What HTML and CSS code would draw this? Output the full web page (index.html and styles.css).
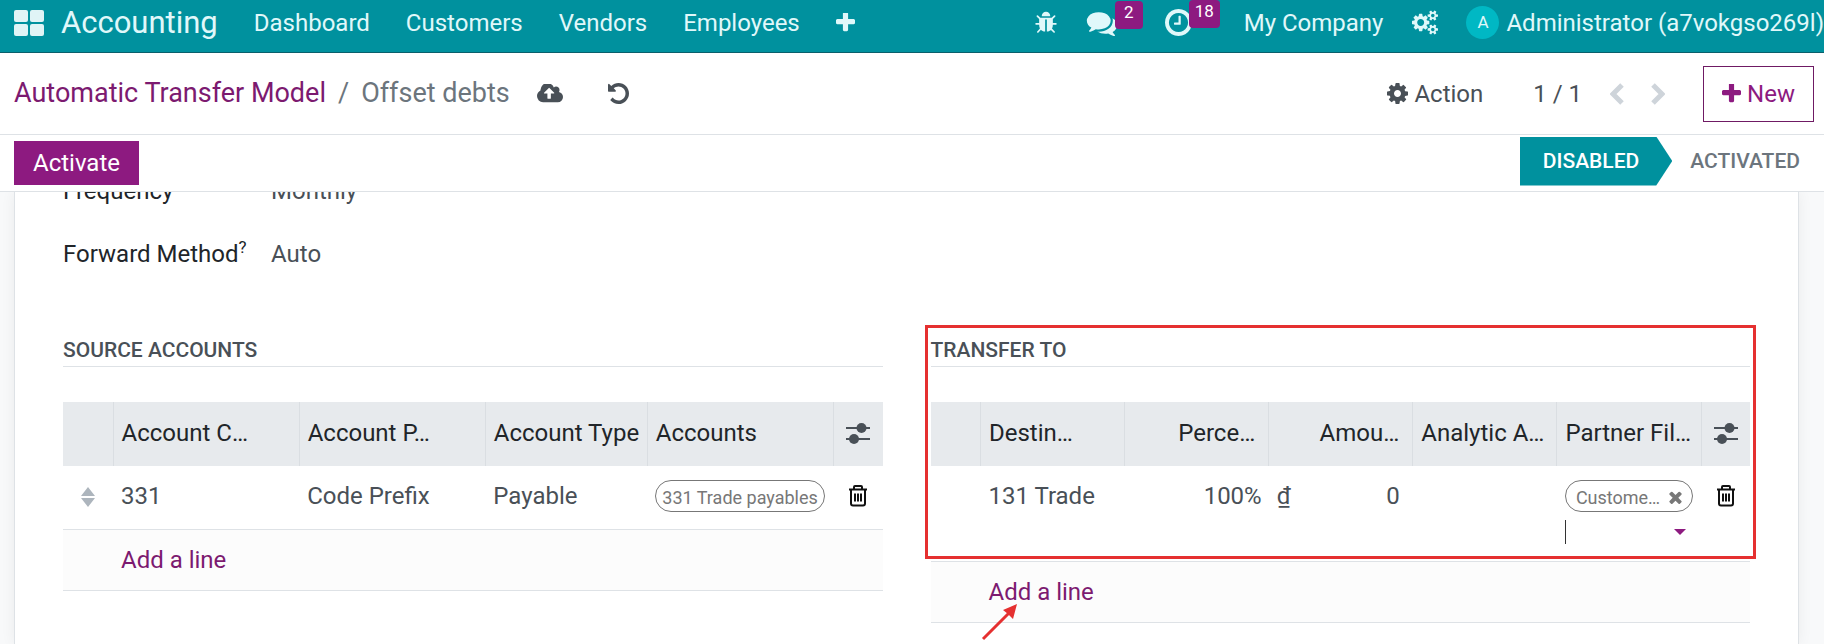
FILE: index.html
```
<!DOCTYPE html>
<html lang="en">
<head>
    <meta charset="UTF-8">
    <title>Offset debts - Accounting</title>
    <link rel="stylesheet" href="styles.css">
</head>
<body>
    <svg class="sprite" aria-hidden="true">
        <symbol id="i-plus" viewBox="192 192 1408 1408"><path d="M1600 736v192q0 40-28 68t-68 28h-416v416q0 40-28 68t-68 28h-192q-40 0-68-28t-28-68v-416h-416q-40 0-68-28t-28-68v-192q0-40 28-68t68-28h416v-416q0-40 28-68t68-28h192q40 0 68 28t28 68v416h416q40 0 68 28t28 68z"/></symbol>
        <symbol id="i-bug" viewBox="0 0 1792 1792"><path d="M1696 960q0 26-19 45t-45 19h-224q0 171-67 290l208 209q19 19 19 45t-19 45q-18 19-45 19t-45-19l-198-197q-5 5-15 13t-42 28.500-65 36.500-82 29-97 13v-896h-128v896q-51 0-101.500-13.500t-87-33-66-39-43.500-32.500l-15-14-183 207q-20 21-48 21-24 0-43-16-19-18-20.500-44.500t15.500-46.500l202-227q-58-114-58-274h-224q-26 0-45-19t-19-45 19-45 45-19h224v-294l-173-173q-19-19-19-45t19-45 45-19 45 19l173 173h844l173-173q19-19 45-19t45 19 19 45-19 45l-173 173v294h224q26 0 45 19t19 45zm-480-576h-640q0-133 93.500-226.500t226.500-93.500 226.500 93.500 93.500 226.500z"/></symbol>
        <symbol id="i-comments" viewBox="0 128 1792 1536"><path d="M1408 768q0 139-94 257t-256.500 186.500-353.500 68.500q-86 0-176-16-124 88-278 128-36 9-86 16h-3q-11 0-20.500-8t-11.500-21q-1-3-1-6.500t.5-6.500 2-6l2.500-5 3.500-5.500 4-5 4.500-5 4-4.500q5-6 23-25t26-29.500 22.500-29 25-38.500 20.500-44q-124-72-195-177t-71-224q0-139 94-257t256.500-186.500 353.500-68.500 353.500 68.500 256.500 186.500 94 257zm384 256q0 120-71 224.500t-195 176.500q10 24 20.500 44t25 38.500 22.500 29 26 29.500 23 25q1 1 4 4.500t4.500 5 4 5 3.500 5.500l2.500 5 2 6 .5 6.500-1 6.500q-3 14-13 22t-22 7q-50-7-86-16-154-40-278-128-90 16-176 16-271 0-472-132 58 4 88 4 161 0 309-45t264-129q125-92 192-212t67-254q0-77-23-152 129 71 204 178t75 230z"/></symbol>
        <symbol id="i-clock" viewBox="128 128 1536 1536"><path d="M1024 544v448q0 14-9 23t-23 9h-320q-14 0-23-9t-9-23v-64q0-14 9-23t23-9h224v-352q0-14 9-23t23-9h64q14 0 23 9t9 23zm416 352q0-148-73-273t-198-198-273-73-273 73-198 198-73 273 73 273 198 198 273 73 273-73 198-198 73-273zm224 0q0 209-103 385.500t-279.500 279.500-385.500 103-385.500-103-279.500-279.500-103-385.500 103-385.500 279.500-279.500 385.500-103 385.500 103 279.500 279.500 103 385.500z"/></symbol>
        <symbol id="i-cogs" viewBox="0 0 1920 1792"><path d="M896 896q0-106-75-181t-181-75-181 75-75 181 75 181 181 75 181-75 75-181zm768 512q0-52-38-90t-90-38-90 38-38 90q0 53 37.500 90.500t90.500 37.500 90.500-37.500 37.500-90.500zm0-1024q0-52-38-90t-90-38-90 38-38 90q0 53 37.500 90.500t90.500 37.500 90.500-37.500 37.500-90.500zm-384 421v185q0 10-7 19.500t-16 10.500l-155 24q-11 35-32 76 34 48 90 115 7 11 7 20 0 12-7 19-23 30-82.500 89.500t-78.500 59.500q-11 0-21-7l-115-90q-37 19-77 31-11 108-23 155-7 24-30 24h-186q-11 0-20-7.500t-10-17.500l-23-153q-34-10-75-31l-118 89q-7 7-20 7-11 0-21-8-144-133-144-160 0-9 7-19 10-14 41-53t47-61q-23-44-35-82l-152-24q-10-1-17-9.500t-7-19.500v-185q0-10 7-19.500t16-10.500l155-24q11-35 32-76-34-48-90-115-7-11-7-20 0-12 7-20 22-30 82-89t79-59q11 0 21 7l115 90q34-18 77-32 11-108 23-154 7-24 30-24h186q11 0 20 7.500t10 17.500l23 153q34 10 75 31l118-89q8-7 20-7 11 0 21 8 144 133 144 160 0 8-7 19-12 16-42 54t-45 60q23 48 34 82l152 23q10 2 17 10.500t7 19.500zm640 533v140q0 16-149 31-12 27-30 52 51 113 51 138 0 4-4 7-122 71-124 71-8 0-46-47t-52-68q-20 2-30 2t-30-2q-14 21-52 68t-46 47q-2 0-124-71-4-3-4-7 0-25 51-138-18-25-30-52-149-15-149-31v-140q0-16 149-31 13-29 30-52-51-113-51-138 0-4 4-7 4-2 35-20t59-34 30-16q8 0 46 46.500t52 67.500q20-2 30-2t30 2q51-71 92-112l6-2q4 0 124 70 4 3 4 7 0 25-51 138 17 23 30 52 149 15 149 31zm0-1024v140q0 16-149 31-12 27-30 52 51 113 51 138 0 4-4 7-122 71-124 71-8 0-46-47t-52-68q-20 2-30 2t-30-2q-14 21-52 68t-46 47q-2 0-124-71-4-3-4-7 0-25 51-138-18-25-30-52-149-15-149-31v-140q0-16 149-31 13-29 30-52-51-113-51-138 0-4 4-7 4-2 35-20t59-34 30-16q8 0 46 46.500t52 67.500q20-2 30-2t30 2q51-71 92-112l6-2q4 0 124 70 4 3 4 7 0 25-51 138 17 23 30 52 149 15 149 31z"/></symbol>
        <symbol id="i-cloud" viewBox="0 256 1920 1280"><path d="M1280 864q0-14-9-23l-352-352q-9-9-23-9t-23 9l-351 351q-10 12-10 24 0 14 9 23t23 9h224v352q0 13 9.500 22.500t22.500 9.500h192q13 0 22.500-9.500t9.500-22.500v-352h224q13 0 22.500-9.500t9.500-22.500zm640 288q0 159-112.500 271.500t-271.500 112.500h-1088q-185 0-316.500-131.500t-131.500-316.500q0-130 70-240t188-165q-2-30-2-43 0-212 150-362t362-150q156 0 285.500 87t188.500 231q71-62 166-62 106 0 181 75t75 181q0 76-41 138 130 31 213.500 135.500t83.500 238.500z"/></symbol>
        <symbol id="i-undo" viewBox="128 128 1536 1536"><path d="M1664 896q0 156-61 298t-164 245-245 164-298 61q-172 0-327-72.500t-264-204.500q-7-10-6.500-22.500t8.500-20.500l137-138q10-9 25-9 16 2 23 12 73 95 179 147t225 52q104 0 198.500-40.500t163.500-109.500 109.500-163.500 40.500-198.500-40.500-198.500-109.500-163.500-163.500-109.500-198.500-40.500q-98 0-188 35.500t-160 101.500l137 138q31 30 14 69-17 40-59 40h-448q-26 0-45-19t-19-45v-448q0-42 40-59 39-17 69 14l130 129q107-101 244.500-156.500t284.500-55.500q156 0 298 61t245 164 164 245 61 298z"/></symbol>
        <symbol id="i-cog" viewBox="128 128 1536 1536"><path d="M1152 896q0-106-75-181t-181-75-181 75-75 181 75 181 181 75 181-75 75-181zm512-109v222q0 12-8 23t-20 13l-185 28q-19 54-39 91 35 50 107 138 10 12 10 25t-9 23q-27 37-99 108t-94 71q-12 0-26-9l-138-108q-44 23-91 38-16 136-29 186-7 28-36 28h-222q-14 0-24.500-8.500t-11.500-21.500l-28-184q-49-16-90-37l-141 107q-10 9-25 9-14 0-25-11-126-114-165-168-7-10-7-23 0-12 8-23 15-21 51-66.500t54-70.500q-27-50-41-99l-183-27q-13-2-21-12.500t-8-23.500v-222q0-12 8-23t19-13l186-28q14-46 39-92-40-57-107-138-10-12-10-24 0-10 9-23 26-36 98.500-107.500t94.500-71.500q13 0 26 10l138 107q44-23 91-38 16-136 29-186 7-28 36-28h222q14 0 24.500 8.500t11.500 21.500l28 184q49 16 90 37l142-107q9-9 24-9 13 0 25 10 129 119 165 170 7 8 7 22 0 12-8 23-15 21-51 66.500t-54 70.500q26 50 41 98l183 28q13 2 21 12.500t8 23.500z"/></symbol>
        <symbol id="i-times" viewBox="302 302 1188 1252"><path d="M1490 1322q0 40-28 68l-136 136q-28 28-68 28t-68-28l-294-294-294 294q-28 28-68 28t-68-28l-136-136q-28-28-28-68t28-68l294-294-294-294q-28-28-28-68t28-68l136-136q28-28 68-28t68 28l294 294 294-294q28-28 68-28t68 28l136 136q28 28 28 68t-28 68l-294 294 294 294q28 28 28 68z"/></symbol>
        <symbol id="i-sliders" viewBox="0 0 24 22"><path d="M0 5h24v2H0zM0 16h24v2H0z"/><circle cx="15.500" cy="6" r="5"/><circle cx="8" cy="17" r="5"/></symbol>
        <symbol id="i-trash" viewBox="0 0 20 22"><path d="M1 4.500h18M6 4.500v-2.500q0-1 1-1h6q1 0 1 1v2.500M3 4.500v14q0 2 2 2h10q2 0 2-2v-14M7 8.500v8M10 8.500v8M13 8.500v8" fill="none" stroke="currentColor" stroke-width="2"/></symbol>
        <symbol id="i-sort" viewBox="0 0 14 20"><path d="M7 0l7 9H0zM7 20l7-9H0z"/></symbol>
    </svg>

    <header class="navbar">
        <button class="apps" aria-label="Apps"><i></i><i></i><i></i><i></i></button>
        <a class="brand" href="#">Accounting</a>
        <nav class="menu">
            <a href="#">Dashboard</a>
            <a href="#">Customers</a>
            <a href="#">Vendors</a>
            <a href="#">Employees</a>
            <button aria-label="More"><svg class="icon-plus"><use href="#i-plus"/></svg></button>
        </nav>
        <div class="systray">
            <button aria-label="Debug"><svg class="icon-bug"><use href="#i-bug"/></svg></button>
            <button class="tray-chat" aria-label="Messages"><svg class="icon-comments"><use href="#i-comments"/></svg><span class="badge">2</span></button>
            <button class="tray-clock" aria-label="Activities"><svg class="icon-clock"><use href="#i-clock"/></svg><span class="badge">18</span></button>
            <a class="company" href="#">My Company</a>
            <button class="tray-cogs" aria-label="Settings"><svg class="icon-cogs"><use href="#i-cogs"/></svg></button>
            <button class="user"><span class="avatar">A</span>Administrator (a7vokgso269l)</button>
        </div>
    </header>

    <div class="control-panel">
        <div class="breadcrumb">
            <a href="#">Automatic Transfer Model</a>
            <span>/</span>
            <span>Offset debts</span>
        </div>
        <button class="save" aria-label="Save"><svg class="icon-cloud"><use href="#i-cloud"/></svg></button>
        <button class="discard" aria-label="Discard"><svg class="icon-undo"><use href="#i-undo"/></svg></button>
        <button class="action"><svg class="icon-cog"><use href="#i-cog"/></svg>Action</button>
        <span class="pager">1 / 1</span>
        <div class="pager-buttons">
            <button aria-label="Previous"><svg class="icon-chevron" viewBox="0 0 14 22"><path d="M12 2L3 11l9 9"/></svg></button>
            <button aria-label="Next"><svg class="icon-chevron" viewBox="0 0 14 22"><path d="M2 2l9 9-9 9"/></svg></button>
        </div>
        <button class="new"><svg class="icon-plus"><use href="#i-plus"/></svg>New</button>
    </div>

    <div class="statusbar">
        <button class="activate">Activate</button>
        <div class="stages">
            <button class="stage current">DISABLED</button>
            <button class="stage">ACTIVATED</button>
        </div>
    </div>

    <main class="content">
        <div class="sheet">
            <dl class="fields">
                <dt>Frequency</dt>
                <dd>Monthly</dd>
                <dt>Forward Method<sup>?</sup></dt>
                <dd>Auto</dd>
            </dl>
            <div class="groups">
                <section class="group">
                    <h2>SOURCE ACCOUNTS</h2>
                    <table>
                        <colgroup>
                            <col class="col-handle"><col><col><col class="col-type"><col><col class="col-tools">
                        </colgroup>
                        <thead>
                            <tr>
                                <th></th>
                                <th>Account C…</th>
                                <th>Account P…</th>
                                <th>Account Type</th>
                                <th>Accounts</th>
                                <th class="tools"><button aria-label="Columns"><svg class="icon-sliders"><use href="#i-sliders"/></svg></button></th>
                            </tr>
                        </thead>
                        <tbody>
                            <tr>
                                <td class="handle"><svg class="icon-sort"><use href="#i-sort"/></svg></td>
                                <td>331</td>
                                <td>Code Prefix</td>
                                <td>Payable</td>
                                <td><span class="tag">331 Trade payables</span></td>
                                <td class="tools"><button aria-label="Delete"><svg class="icon-trash"><use href="#i-trash"/></svg></button></td>
                            </tr>
                            <tr class="add">
                                <td></td>
                                <td colspan="5"><a href="#">Add a line</a></td>
                            </tr>
                        </tbody>
                    </table>
                </section>
                <section class="group">
                    <h2>TRANSFER TO</h2>
                    <table>
                        <colgroup>
                            <col class="col-handle"><col><col><col><col><col><col class="col-tools">
                        </colgroup>
                        <thead>
                            <tr>
                                <th></th>
                                <th>Destin…</th>
                                <th class="number">Perce…</th>
                                <th class="number">Amou…</th>
                                <th>Analytic A…</th>
                                <th>Partner Fil…</th>
                                <th class="tools"><button aria-label="Columns"><svg class="icon-sliders"><use href="#i-sliders"/></svg></button></th>
                            </tr>
                        </thead>
                        <tbody>
                            <tr>
                                <td></td>
                                <td>131 Trade</td>
                                <td class="percent">100%</td>
                                <td><div class="money"><span>₫</span><span>0</span></div></td>
                                <td></td>
                                <td>
                                    <span class="tag removable">Custome…<button aria-label="Remove"><svg class="icon-times"><use href="#i-times"/></svg></button></span>
                                    <div class="lookup"><input type="text" aria-label="Partner Filter"><i class="caret"></i></div>
                                </td>
                                <td class="tools"><button aria-label="Delete"><svg class="icon-trash"><use href="#i-trash"/></svg></button></td>
                            </tr>
                            <tr class="add">
                                <td></td>
                                <td colspan="6"><a class="pointed" href="#">Add a line<svg class="arrow" viewBox="0 0 38 38"><path d="M2 36L28 10" fill="none" stroke="#e53030" stroke-width="3"/><path d="M36 1L22 7l5 4 5 5z" fill="#e53030"/></svg></a></td>
                            </tr>
                        </tbody>
                    </table>
                    <div class="highlight"></div>
                </section>
            </div>
        </div>
    </main>
</body>
</html>
```
FILE: styles.css
```
* {
    box-sizing: border-box;
}
body {
    font-family: Roboto, "Liberation Sans", sans-serif;
    font-size: 24px;
    line-height: 32px;
    margin: 0;
    height: 100vh;
    display: flex;
    flex-direction: column;
    overflow: hidden;
    color: #495057;
    background-color: #fff;
}
a {
    color: #7c1a70;
    text-decoration: none;
}
button {
    font: inherit;
    color: inherit;
    background: none;
    border: 0;
    padding: 0;
    display: flex;
    align-items: center;
}
svg {
    display: block;
    fill: currentColor;
    flex: none;
}
.sprite {
    display: none;
}

/* top bar */
.navbar {
    display: flex;
    align-items: center;
    height: 53px;
    flex: none;
    padding: 0 0 7px 14px;
    background-color: #00919e;
    border-bottom: 1px solid #0b5f6b;
    color: #e0f8fa;
    white-space: nowrap;
}
.navbar a {
    color: inherit;
}
.apps {
    display: grid;
    grid-template-columns: 14px 14px;
    gap: 2px;
}
.apps i {
    height: 12px;
    border-radius: 2px;
    background-color: #e0f4f6;
}
.brand {
    font-size: 31px;
    margin-left: 17px;
}
.menu {
    display: flex;
    align-items: center;
    gap: 36px;
    margin-left: 36px;
}
.systray {
    display: flex;
    align-items: center;
    margin-left: auto;
}
.systray button {
    position: relative;
}
.tray-chat {
    margin-left: 28px;
}
.tray-clock {
    margin-left: 47px;
}
.badge {
    position: absolute;
    left: 29px;
    top: -9px;
    min-width: 28px;
    height: 28px;
    padding: 0 6px;
    border-radius: 4px;
    background-color: #8d1a80;
    color: #fff;
    font-size: 17px;
    line-height: 22px;
    text-align: center;
}
.tray-clock .badge {
    left: 24px;
}
.company {
    margin-left: 52px;
}
.tray-cogs {
    margin-left: 29px;
}
.user {
    margin-left: 28px;
    gap: 7px;
}
.avatar {
    width: 33px;
    height: 33px;
    border-radius: 50%;
    background-color: #00b8c4;
    font-size: 17px;
    text-align: center;
}

/* control panel */
.control-panel {
    display: flex;
    align-items: center;
    height: 82px;
    flex: none;
    padding: 0 10px 0 14px;
    border-bottom: 1px solid #dee2e6;
    white-space: nowrap;
}
.breadcrumb {
    display: flex;
    gap: 12px;
    padding-bottom: 2px;
    font-size: 27px;
    color: #6c757d;
}
.save {
    margin-left: 27px;
}
.discard {
    margin-left: 45px;
}
.action {
    margin-left: auto;
    gap: 6px;
}
.pager {
    margin-left: 50px;
}
.pager-buttons {
    display: flex;
    gap: 27px;
    margin: 0 38px 0 28px;
    color: #ced4da;
}
.new {
    height: 56px;
    padding: 0 18px;
    gap: 6px;
    border: 1px solid #6f1a64;
    color: #8d1a80;
}

/* status bar */
.statusbar {
    display: flex;
    align-items: center;
    justify-content: space-between;
    height: 57px;
    flex: none;
    padding: 0 24px 0 14px;
    border-bottom: 1px solid #dee2e6;
}
.activate {
    height: 44px;
    padding: 0 19px;
    background-color: #8d1a80;
    color: #fff;
}
.stages {
    display: flex;
    gap: 18px;
    margin-bottom: 4px;
}
.stage {
    height: 49px;
    font-size: 21px;
    font-weight: 500;
    color: #6c757d;
}
.stage.current {
    padding: 0 33px 0 23px;
    background-color: #00919e;
    color: #fff;
    clip-path: polygon(0 0, calc(100% - 16px) 0, 100% 50%, calc(100% - 16px) 100%, 0 100%);
}

/* form */
.content {
    flex: 1;
    overflow: hidden;
    display: flex;
    background-color: #f8f9fa;
}
.sheet {
    flex: 1;
    margin: 0 25px 0 14px;
    padding: 0 48px;
    border: solid #dee2e6;
    border-width: 0 1px;
    background-color: #fff;
    box-shadow: 0 0 14px rgba(0,0,0,0.06);
}
.fields {
    display: grid;
    grid-template-columns: 208px 1fr;
    row-gap: 31px;
    margin: -17px 0 64px;
}
.fields dt {
    color: #212529;
}
.fields dd {
    margin: 0;
}
.fields sup {
    font-size: 17px;
    line-height: 0;
}
.groups {
    display: grid;
    grid-template-columns: 1fr 1fr;
    gap: 48px;
    align-items: start;
}
.group {
    position: relative;
    min-width: 0;
}
h2 {
    margin: 0 0 35px;
    border-bottom: 1px solid #dee2e6;
    font-size: 21px;
    font-weight: 500;
}
table {
    width: 100%;
    table-layout: fixed;
    border-collapse: collapse;
}
.col-handle {
    width: 50px;
}
.col-type {
    width: 162px;
}
.col-tools {
    width: 49px;
}
th, td {
    padding: 0 8px;
    text-align: left;
    white-space: nowrap;
}
th {
    height: 64px;
    padding-bottom: 2px;
    font-weight: 400;
    color: #212529;
    background-color: #e7eaed;
    border-left: 1px solid #dadee2;
}
th:first-child {
    border-left: 0;
}
td {
    padding-top: 14px;
    padding-bottom: 17px;
    vertical-align: top;
}
.add td {
    padding-bottom: 14px;
    background-color: #fcfcfc;
    border-top: 1px solid #dee2e6;
    border-bottom: 1px solid #dee2e6;
}
.number {
    padding-right: 13px;
    text-align: right;
}
.percent {
    padding-right: 7px;
    text-align: right;
}
.money {
    display: flex;
    justify-content: space-between;
    padding-right: 5px;
}
.handle {
    padding-left: 18px;
    color: #adb5bd;
}
.handle svg {
    margin-top: 7px;
}
.tools {
    color: #495057;
}
.tools button {
    width: 100%;
    height: 32px;
    justify-content: center;
}
td.tools {
    color: #111;
}
.tag {
    display: inline-flex;
    align-items: center;
    height: 32px;
    padding: 3px 6px 0;
    border: 1px solid #777;
    border-radius: 16px;
    color: #777;
    font-size: 18px;
    vertical-align: top;
}
.tag.removable {
    display: flex;
    justify-content: space-between;
    padding: 3px 10px 0;
}
.lookup {
    display: flex;
    align-items: center;
    justify-content: space-between;
    margin-top: 8px;
    padding-right: 7px;
}
.lookup input {
    width: 80px;
    height: 24px;
    padding: 0;
    border: 0;
    border-left: 1px solid #333;
    outline: 0;
    background: none;
    font: inherit;
}
.caret {
    border: 6px solid transparent;
    border-top-color: #8d1a80;
    border-bottom: 0;
}

/* marks drawn over the form */
.highlight {
    position: absolute;
    inset: -9px -6px 64px;
    border: 3px solid #e53030;
    pointer-events: none;
}
.pointed {
    position: relative;
}
.arrow {
    position: absolute;
    left: -8px;
    top: 25px;
    width: 38px;
    height: 38px;
}

/* icon sizes */
.icon-plus {
    width: 19px;
    height: 19px;
}
.icon-bug {
    width: 24px;
    height: 24px;
}
.icon-comments {
    width: 32px;
    height: 26px;
}
.icon-clock {
    width: 27px;
    height: 27px;
}
.icon-cogs {
    width: 26px;
    height: 25px;
}
.icon-cloud {
    width: 26px;
    height: 19px;
}
.icon-undo, .icon-cog {
    width: 21px;
    height: 21px;
}
.icon-chevron {
    width: 14px;
    height: 22px;
    fill: none;
    stroke: currentColor;
    stroke-width: 5;
}
.icon-times {
    width: 13px;
    height: 13px;
}
.icon-sliders {
    width: 24px;
    height: 22px;
}
.icon-trash {
    width: 20px;
    height: 22px;
}
.icon-sort {
    width: 14px;
    height: 20px;
}
```
